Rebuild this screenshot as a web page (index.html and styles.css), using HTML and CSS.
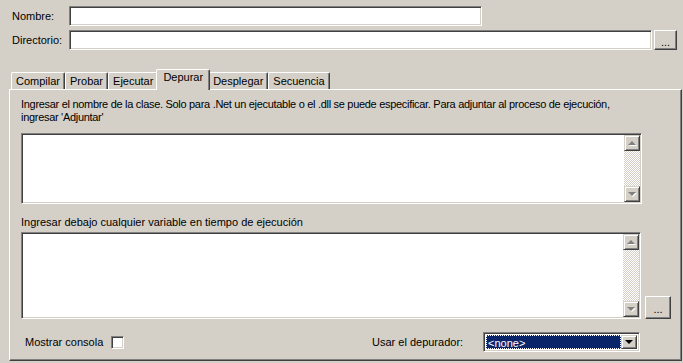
FILE: index.html
```html
<!DOCTYPE html>
<html lang="es">
<head>
    <meta charset="UTF-8">
    <title>Propiedades del proyecto</title>
    <link rel="stylesheet" href="styles.css">
</head>
<body>
    <div class="dialog">
        <div class="field">
            <label for="nombre">Nombre:</label>
            <input type="text" id="nombre" class="text-input name-input">
        </div>
        <div class="field">
            <label for="directorio">Directorio:</label>
            <input type="text" id="directorio" class="text-input dir-input">
            <button class="btn browse">...</button>
        </div>

        <div class="tabs">
            <div class="tab-strip">
                <div class="tab">Compilar</div>
                <div class="tab">Probar</div>
                <div class="tab">Ejecutar</div>
                <div class="tab active">Depurar</div>
                <div class="tab">Desplegar</div>
                <div class="tab">Secuencia</div>
            </div>
            <div class="tab-panel">
                <p class="desc">Ingresar el nombre de la clase. Solo para .Net un ejecutable o el .dll se puede especificar. Para adjuntar al proceso de ejecución,<br>ingresar 'Adjuntar'</p>
                <div class="memo memo-class">
                    <textarea></textarea>
                    <div class="vscroll">
                        <div class="sb-btn"><span class="arrow up"></span></div>
                        <div class="sb-track"></div>
                        <div class="sb-btn"><span class="arrow down"></span></div>
                    </div>
                </div>

                <div class="caption">Ingresar debajo cualquier variable en tiempo de ejecución</div>
                <div class="memo-row">
                    <div class="memo memo-vars">
                        <textarea></textarea>
                        <div class="vscroll">
                            <div class="sb-btn"><span class="arrow up"></span></div>
                            <div class="sb-track"></div>
                            <div class="sb-btn"><span class="arrow down"></span></div>
                        </div>
                    </div>
                    <button class="btn vars-btn">...</button>
                </div>

                <div class="bottom-row">
                    <label class="console-label">Mostrar consola</label>
                    <span class="checkbox"></span>
                    <label class="debugger-label">Usar el depurador:</label>
                    <div class="combo">
                        <div class="combo-value">&lt;none&gt;</div>
                        <div class="combo-btn"><span class="arrow drop"></span></div>
                    </div>
                </div>
            </div>
        </div>
    </div>
</body>
</html>
```

FILE: styles.css
```css
body {
    margin: 0;
    background: #d4d0c8;
    font-family: "Liberation Sans", Arial, sans-serif;
    font-size: 11px;
    color: #000;
}
.dialog {
    height: 363px;
    box-sizing: border-box;
    padding-top: 6px;
}
.field {
    display: flex;
    align-items: center;
    height: 20px;
    padding-left: 12px;
}
.field + .field {
    margin-top: 4px;
}
.field label {
    width: 57px;
}
.text-input {
    height: 20px;
    box-sizing: border-box;
    margin: 0;
    padding: 0 3px;
    font: inherit;
    background: #fff;
    border-top: 1px solid #808080;
    border-left: 1px solid #808080;
    border-right: 1px solid #fff;
    border-bottom: 1px solid #fff;
    box-shadow: inset 1px 1px #404040, inset -1px -1px #d4d0c8;
    outline: none;
}
.name-input {
    width: 413px;
}
.dir-input {
    flex: 1;
}
.btn {
    margin: 0;
    padding: 3px 0 0;
    font: inherit;
    color: #000;
    background: #d4d0c8;
    box-sizing: border-box;
    border-top: 1px solid #fff;
    border-left: 1px solid #fff;
    border-right: 1px solid #404040;
    border-bottom: 1px solid #404040;
    box-shadow: inset -1px -1px #808080;
    line-height: 12px;
}
.browse {
    width: 23px;
    height: 20px;
    margin: 0 6px 0 2px;
}
.tabs {
    margin: 19px 1px 0 9px;
}
.tab-strip {
    display: flex;
    align-items: flex-end;
    height: 20px;
    padding-left: 2px;
}
.tab {
    height: 17px;
    box-sizing: border-box;
    padding: 0 4px;
    line-height: 16px;
    border-top: 1px solid #fff;
    border-left: 1px solid #fff;
    border-right: 1px solid #404040;
    box-shadow: inset -1px 0 #808080;
    border-radius: 2px 2px 0 0;
}
.tab.active {
    height: 21px;
    margin: 0 -2px -1px;
    padding: 0 6px;
    line-height: 15px;
    position: relative;
    z-index: 1;
    background: #d4d0c8;
}
.tab-panel {
    border-top: 1px solid #fff;
    border-left: 1px solid #fff;
    border-right: 1px solid #404040;
    border-bottom: 1px solid #404040;
    box-shadow: inset -1px -1px #808080;
    padding: 8px 39px 8px 11px;
}
.desc {
    margin: 0;
    line-height: 13px;
    white-space: nowrap;
    letter-spacing: -0.3px;
}
.memo {
    display: flex;
    box-sizing: border-box;
    background: #fff;
    border-top: 1px solid #808080;
    border-left: 1px solid #808080;
    border-right: 1px solid #fff;
    border-bottom: 1px solid #fff;
    box-shadow: inset 1px 1px #404040, inset -1px -1px #d4d0c8;
    padding: 1px;
}
.memo textarea {
    flex: 1;
    border: none;
    resize: none;
    outline: none;
    margin: 0;
    padding: 2px;
    font: inherit;
    background: #fff;
}
.memo-class {
    margin-top: 9px;
    height: 71px;
}
.caption {
    margin-top: 12px;
    line-height: 13px;
    margin-bottom: 3px;
}
.memo-row {
    display: flex;
    align-items: flex-end;
    gap: 4px;
}
.memo-vars {
    width: 620px;
    height: 87px;
}
.vars-btn {
    width: 26px;
    height: 23px;
    margin-right: -30px;
}
.vscroll {
    width: 16px;
    display: flex;
    flex-direction: column;
}
.sb-track {
    flex: 1;
    background: repeating-conic-gradient(#fff 0 25%, #d4d0c8 0 50%) 0 0 / 2px 2px;
}
.sb-btn {
    height: 16px;
    box-sizing: border-box;
    background: #d4d0c8;
    border-top: 1px solid #d4d0c8;
    border-left: 1px solid #d4d0c8;
    border-right: 1px solid #404040;
    border-bottom: 1px solid #404040;
    box-shadow: inset 1px 1px #fff, inset -1px -1px #808080;
    display: flex;
    align-items: center;
    justify-content: center;
}
.arrow {
    width: 0;
    height: 0;
    border-left: 4px solid transparent;
    border-right: 4px solid transparent;
}
.arrow.up {
    border-bottom: 4px solid #808080;
    filter: drop-shadow(1px 1px 0 #fff);
}
.arrow.down {
    border-top: 4px solid #808080;
    filter: drop-shadow(1px 1px 0 #fff);
}
.arrow.drop {
    border-top: 4px solid #000;
}
.bottom-row {
    display: flex;
    align-items: center;
    height: 20px;
    margin-top: 13px;
}
.console-label {
    margin-left: 4px;
}
.checkbox {
    width: 13px;
    height: 13px;
    box-sizing: border-box;
    margin-left: 8px;
    background: #fff;
    border-top: 1px solid #808080;
    border-left: 1px solid #808080;
    border-right: 1px solid #fff;
    border-bottom: 1px solid #fff;
    box-shadow: inset 1px 1px #404040, inset -1px -1px #d4d0c8;
}
.debugger-label {
    margin-left: auto;
    width: 111px;
}
.combo {
    width: 157px;
    height: 20px;
    margin-right: 2px;
    box-sizing: border-box;
    display: flex;
    padding: 2px;
    background: #fff;
    border-top: 1px solid #808080;
    border-left: 1px solid #808080;
    border-right: 1px solid #fff;
    border-bottom: 1px solid #fff;
    box-shadow: inset 1px 1px #404040, inset -1px -1px #d4d0c8;
}
.combo-value {
    flex: 1;
    background: #0a246a;
    color: #fff;
    border: 1px dotted #fff;
    line-height: 14px;
    padding-left: 1px;
}
.combo-btn {
    width: 16px;
    box-sizing: border-box;
    background: #d4d0c8;
    border-top: 1px solid #d4d0c8;
    border-left: 1px solid #d4d0c8;
    border-right: 1px solid #404040;
    border-bottom: 1px solid #404040;
    box-shadow: inset 1px 1px #fff, inset -1px -1px #808080;
    display: flex;
    align-items: center;
    justify-content: center;
}
```
